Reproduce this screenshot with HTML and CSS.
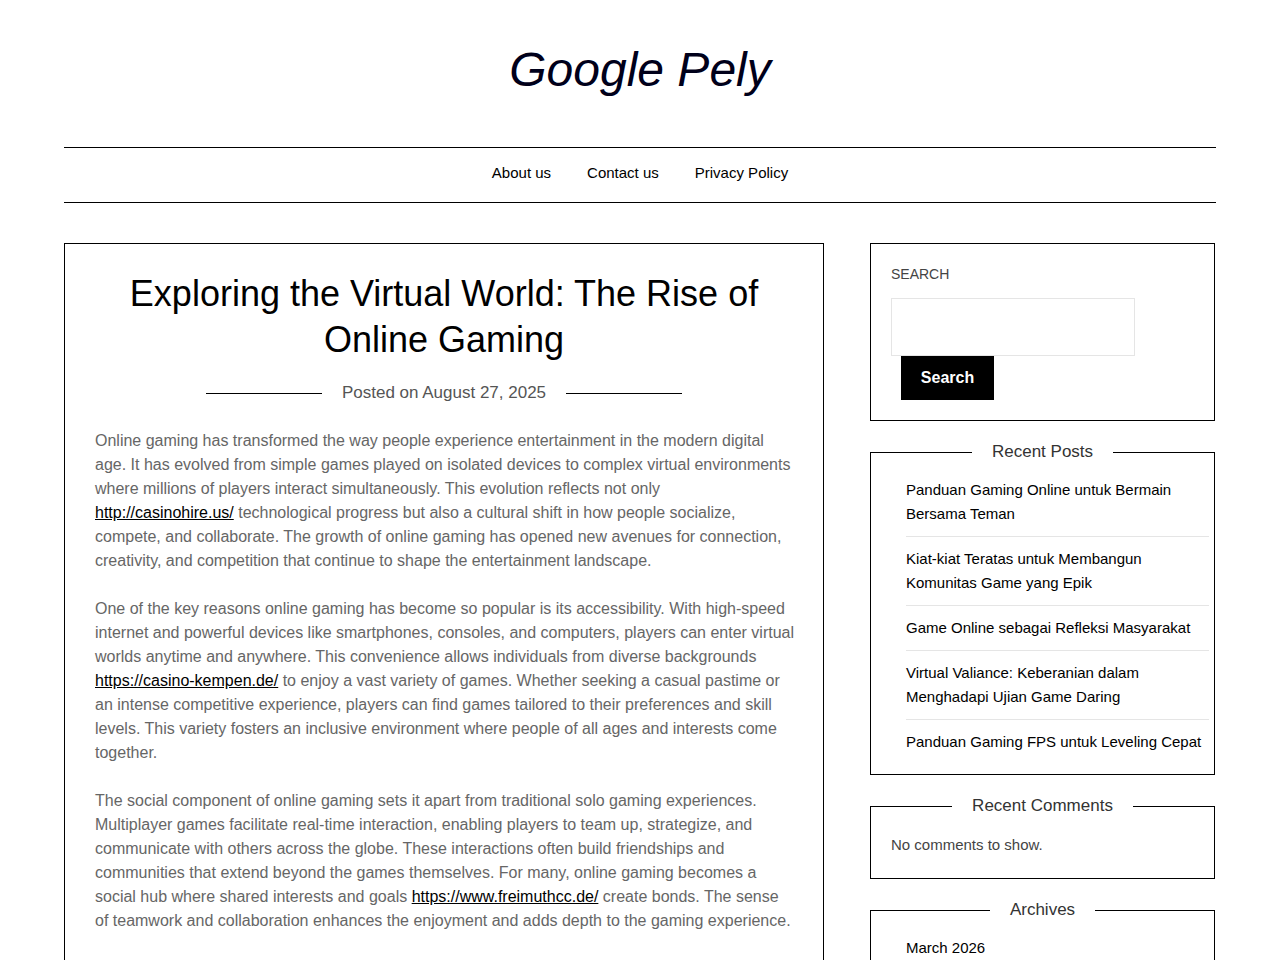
FILE: index.html
```html
<!DOCTYPE html>
<html lang="en">
<head>
<meta charset="utf-8">
<title>Google Pely</title>
<link rel="stylesheet" href="styles.css">
</head>
<body>
<div class="page">
  <header class="site-header">
    <h1 class="site-title">Google Pely</h1>
  </header>
  <nav class="main-nav">
    <ul>
      <li><a href="#">About us</a></li>
      <li><a href="#">Contact us</a></li>
      <li><a href="#">Privacy Policy</a></li>
    </ul>
  </nav>
  <div class="content">
    <main class="article">
      <h2 class="entry-title">Exploring the Virtual World: The Rise of Online Gaming</h2>
      <div class="entry-meta"><span class="meta-line"></span><span class="meta-text">Posted on August 27, 2025</span><span class="meta-line"></span></div>
      <p>Online gaming has transformed the way people experience entertainment in the modern digital age. It has evolved from simple games played on isolated devices to complex virtual environments where millions of players interact simultaneously. This evolution reflects not only <a href="#">http://casinohire.us/</a> technological progress but also a cultural shift in how people socialize, compete, and collaborate. The growth of online gaming has opened new avenues for connection, creativity, and competition that continue to shape the entertainment landscape.</p>
      <p>One of the key reasons online gaming has become so popular is its accessibility. With high-speed internet and powerful devices like smartphones, consoles, and computers, players can enter virtual worlds anytime and anywhere. This convenience allows individuals from diverse backgrounds <a href="#">https://casino-kempen.de/</a> to enjoy a vast variety of games. Whether seeking a casual pastime or an intense competitive experience, players can find games tailored to their preferences and skill levels. This variety fosters an inclusive environment where people of all ages and interests come together.</p>
      <p>The social component of online gaming sets it apart from traditional solo gaming experiences. Multiplayer games facilitate real-time interaction, enabling players to team up, strategize, and communicate with others across the globe. These interactions often build friendships and communities that extend beyond the games themselves. For many, online gaming becomes a social hub where shared interests and goals <a href="#">https://www.freimuthcc.de/</a> create bonds. The sense of teamwork and collaboration enhances the enjoyment and adds depth to the gaming experience.</p>
      <p>Online gaming also provides opportunities for personal growth and skill development. Many games require strategic thinking, quick reflexes, and problem-solving abilities.</p>
    </main>
    <aside class="sidebar">
      <section class="widget search-widget">
        <label class="search-label" for="s">SEARCH</label>
        <input class="search-input" id="s" type="text">
        <button class="search-button" type="button">Search</button>
      </section>
      <section class="widget boxed">
        <h3 class="widget-title"><span>Recent Posts</span></h3>
        <ul class="widget-list">
          <li><a href="#">Panduan Gaming Online untuk Bermain Bersama Teman</a></li>
          <li><a href="#">Kiat-kiat Teratas untuk Membangun Komunitas Game yang Epik</a></li>
          <li><a href="#">Game Online sebagai Refleksi Masyarakat</a></li>
          <li><a href="#">Virtual Valiance: Keberanian dalam Menghadapi Ujian Game Daring</a></li>
          <li><a href="#">Panduan Gaming FPS untuk Leveling Cepat</a></li>
        </ul>
      </section>
      <section class="widget boxed">
        <h3 class="widget-title"><span>Recent Comments</span></h3>
        <p class="no-comments">No comments to show.</p>
      </section>
      <section class="widget boxed">
        <h3 class="widget-title"><span>Archives</span></h3>
        <ul class="widget-list">
          <li><a href="#">March 2026</a></li>
          <li><a href="#">February 2026</a></li>
        </ul>
      </section>
    </aside>
  </div>
</div>
</body>
</html>
```

FILE: styles.css
```css
html, body {
  margin: 0;
  padding: 0;
  background: #fff;
}
body {
  font-family: "Liberation Sans", Arial, Helvetica, sans-serif;
  color: #666;
}
.page {
  width: 1152px;
  margin: 0 auto;
}
.site-header {
  padding-top: 41px;
  text-align: center;
}
.site-title {
  margin: 0;
  font-size: 48px;
  line-height: 58px;
  font-style: italic;
  font-weight: normal;
  color: #00001a;
}
.main-nav {
  margin-top: 48px;
  border-top: 1px solid #000;
  border-bottom: 1px solid #000;
}
.main-nav ul {
  list-style: none;
  margin: 0;
  padding: 13px 0 18px;
  display: flex;
  justify-content: center;
  gap: 36px;
}
.main-nav a {
  display: block;
  font-size: 15px;
  line-height: 23px;
  color: #000;
  text-decoration: none;
}
.content {
  display: flex;
  align-items: flex-start;
  gap: 46px;
  margin-top: 40px;
}
.article {
  width: 760px;
  box-sizing: border-box;
  border: 1px solid #000;
  border-bottom: none;
  padding: 27px 27px 0 30px;
  height: 760px;
  overflow: hidden;
}
.entry-title {
  margin: 0 3px 0 0;
  text-align: center;
  font-size: 36px;
  line-height: 46px;
  font-weight: normal;
  color: #000;
}
.entry-meta {
  margin: 18px 3px 0 0;
  display: flex;
  align-items: center;
  justify-content: center;
  gap: 20px;
}
.meta-line {
  width: 116px;
  border-top: 1px solid #000;
}
.meta-text {
  font-size: 17px;
  line-height: 24px;
  color: #555;
}
.article p {
  margin: 24px 0 0;
  font-size: 16px;
  line-height: 24px;
  color: #666;
}
.article p a {
  color: #000;
  text-decoration: underline;
}
.sidebar {
  width: 345px;
  display: flex;
  flex-direction: column;
  gap: 31px;
}
.widget {
  box-sizing: border-box;
  border: 1px solid #000;
}
.search-widget {
  padding: 19px 20px 20px;
  display: flex;
  flex-direction: column;
  align-items: flex-start;
}
.search-label {
  font-size: 14px;
  line-height: 22px;
  color: #444;
}
.search-input {
  margin: 13px 0 0;
  width: 244px;
  height: 58px;
  box-sizing: border-box;
  border: 1px solid #e5e5e5;
  padding: 0 10px;
  font: inherit;
  outline: none;
}
.search-button {
  margin: 0 0 0 10px;
  width: 93px;
  height: 44px;
  border: none;
  background: #000;
  color: #fff;
  font-family: "Liberation Sans", Arial, sans-serif;
  font-size: 16px;
  font-weight: bold;
  cursor: pointer;
}
.boxed {
  border-top: none;
}
.widget-title {
  margin: 0 -1px;
  display: flex;
  align-items: center;
  font-size: 17px;
  line-height: 24px;
  height: 0;
  font-weight: normal;
  color: #333;
}
.widget-title::before,
.widget-title::after {
  content: "";
  flex: 1;
  border-top: 1px solid #000;
}
.widget-title span {
  padding: 0 20px;
  white-space: nowrap;
}
.widget-list {
  list-style: none;
  margin: 0;
  padding: 16px 5px 10px 35px;
}
.widget-list li {
  padding: 10px 0;
  border-bottom: 1px solid #e5e5e5;
}
.widget-list li:last-child {
  border-bottom: none;
}
.widget-list a {
  display: block;
  font-size: 15px;
  line-height: 24px;
  color: #000;
  text-decoration: none;
}
.no-comments {
  margin: 0;
  padding: 29px 20px 23px;
  font-size: 15px;
  line-height: 20px;
  color: #444;
}
```
